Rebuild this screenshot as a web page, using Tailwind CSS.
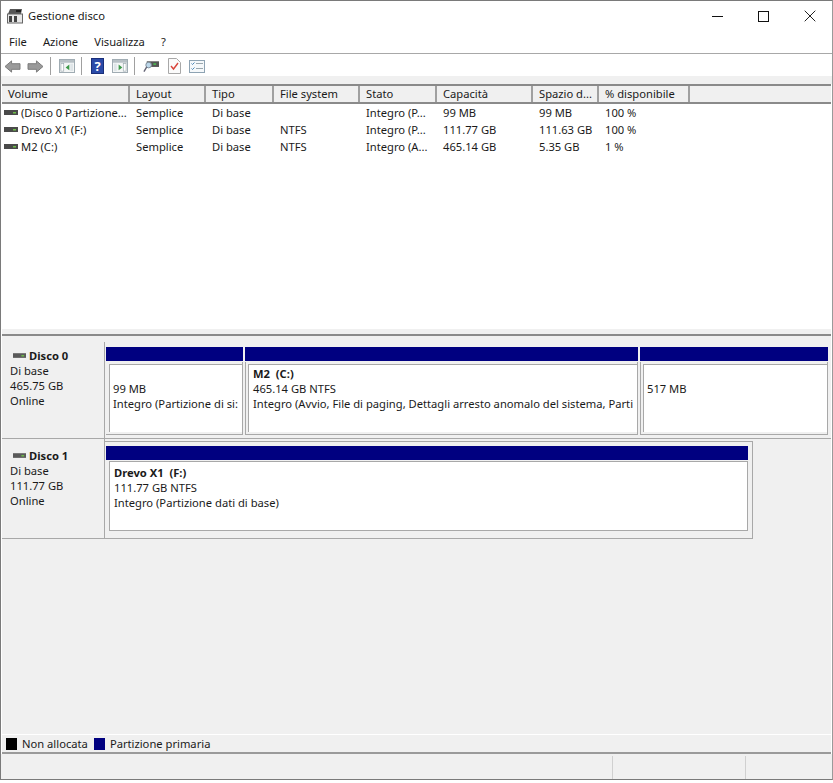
<!DOCTYPE html>
<html><head><meta charset="utf-8"><script src="https://cdn.jsdelivr.net/npm/@tailwindcss/browser@4"></script></head>
<body class="m-0 bg-white">
<div class="w-[833px] h-[783px] overflow-hidden flex flex-col bg-white font-['Noto_Sans',sans-serif] text-[11.2px] leading-[16px] text-[#1a1a1a]">
<div class="w-full h-[780px] flex flex-col border border-[#7a7a7a] border-r-[#9a9a9a]">
  <!-- title -->
  <div class="h-[30px] shrink-0 flex items-center bg-white relative">
    <svg class="ml-[6px] shrink-0" width="16" height="16" viewBox="0 0 16 16"><path d="M3 1h12l-1 5H1z" fill="#555"/><rect x="9" y="2" width="5" height="2" fill="#222"/><rect x="0.5" y="6" width="15" height="9" fill="#e8e8e8" stroke="#666"/><rect x="2" y="8" width="3" height="6" fill="#444"/><rect x="7" y="8" width="3" height="6" fill="#444"/></svg>
    <span class="ml-[5px]">Gestione disco</span>
    <div class="ml-auto flex items-center h-full">
      <svg class="mr-[35px]" width="11" height="11" viewBox="0 0 11 11"><path d="M0 5.5h11" stroke="#111"/></svg>
      <svg class="mr-[35px]" width="11" height="11" viewBox="0 0 11 11"><rect x=".5" y=".5" width="10" height="10" fill="none" stroke="#111"/></svg>
      <svg class="mr-[16px]" width="12" height="12" viewBox="0 0 12 12"><path d="M.7.7l10.6 10.6M11.3.7L.7 11.3" stroke="#222"/></svg>
    </div>
  </div>
  <!-- menu -->
  <div class="h-[23px] shrink-0 flex items-center bg-white border-b border-[#a8a8a8] pl-[8px] gap-[16px]">
    <span>File</span><span>Azione</span><span>Visualizza</span><span>?</span>
  </div>
  <!-- toolbar -->
  <div class="h-[22px] shrink-0 flex items-center bg-white pl-[3px] pt-[2px]">
    <svg class="shrink-0" width="17" height="15" viewBox="0 0 18 16"><path d="M1 8l7-6v3h9v6H8v3z" fill="#9a9a9a" stroke="#777"/></svg>
    <svg class="ml-[6px] shrink-0" width="17" height="15" viewBox="0 0 18 16"><path d="M17 8l-7-6v3H1v6h9v3z" fill="#9a9a9a" stroke="#777"/></svg>
    <div class="ml-[6px] w-px h-[18px] bg-[#a0a0a0]"></div>
    <svg class="ml-[8px] shrink-0" width="16" height="14" viewBox="0 0 17 15"><rect x=".5" y=".5" width="16" height="14" fill="#f4f6f6" stroke="#9aa7ae"/><rect x="1" y="1" width="15" height="3" fill="#b7c0c5"/><rect x="2" y="5" width="3" height="8" fill="#fff" stroke="#9aa7ae" stroke-width=".7"/><path d="M11 6v6l-4-3z" fill="#3e9a4a"/><rect x="12" y="5" width="3" height="8" fill="#dfe5e8"/></svg>
    <div class="ml-[6px] w-px h-[18px] bg-[#a0a0a0]"></div>
    <div class="ml-[9px] w-[13px] h-[16px] bg-[#2a4aa8] border border-[#1a2f7a] text-white font-bold text-[13px] leading-[14px] text-center">?</div>
    <svg class="ml-[8px] shrink-0" width="16" height="14" viewBox="0 0 17 15"><rect x=".5" y=".5" width="16" height="14" fill="#f4f6f6" stroke="#9aa7ae"/><rect x="1" y="1" width="15" height="3" fill="#b7c0c5"/><rect x="2" y="5" width="3" height="8" fill="#dfe5e8"/><path d="M7 6v6l4-3z" fill="#3e9a4a"/><rect x="12" y="5" width="3" height="8" fill="#fff" stroke="#9aa7ae" stroke-width=".7"/></svg>
    <div class="ml-[6px] w-px h-[18px] bg-[#a0a0a0]"></div>
    <svg class="ml-[8px] shrink-0" width="16" height="16" viewBox="0 0 17 16"><rect x="4" y="3" width="13" height="6" fill="#555"/><rect x="11" y="5" width="3" height="2" fill="#4caf50"/><circle cx="6" cy="7" r="3" fill="#bcd7ea" stroke="#7d8c99"/><path d="M4 9l-3 5" stroke="#667" stroke-width="1.5"/></svg>
    <svg class="ml-[9px] shrink-0" width="13" height="16" viewBox="0 0 13 16"><path d="M.5.5h8l4 4v11H.5z" fill="#fbfbfb" stroke="#a8a8a8"/><path d="M3 8l2.5 3L10 5" fill="none" stroke="#d9443a" stroke-width="1.4"/></svg>
    <svg class="ml-[8px] shrink-0" width="16" height="13" viewBox="0 0 16 13"><rect x=".5" y=".5" width="15" height="12" fill="#f5f8fa" stroke="#8ea3b3"/><path d="M2.5 3.5l1 1 2-2M2.5 8.5l1 1 2-2" fill="none" stroke="#4a86b8"/><path d="M7 3.5h7M7 8.5h7" stroke="#9aa7ae"/></svg>
  </div>
  <div class="h-[8px] shrink-0 bg-[#f0f0f0]"></div>
  <!-- list -->
  <div class="h-[245px] shrink-0 flex flex-col bg-white mr-[1px] ml-[1px]">
    <div class="h-[20px] shrink-0 flex bg-[#f0f0f0] border-t-2 border-b-2 border-[#8a8a8a] leading-[16px]">
      <div class="w-[128px] shrink-0 pl-[6px] border-r-2 border-[#a0a0a0]">Volume</div>
      <div class="w-[76px] shrink-0 pl-[6px] border-r-2 border-[#a0a0a0]">Layout</div>
      <div class="w-[68px] shrink-0 pl-[6px] border-r-2 border-[#a0a0a0]">Tipo</div>
      <div class="w-[86px] shrink-0 pl-[6px] border-r-2 border-[#a0a0a0]">File system</div>
      <div class="w-[77px] shrink-0 pl-[6px] border-r-2 border-[#a0a0a0]">Stato</div>
      <div class="w-[96px] shrink-0 pl-[6px] border-r-2 border-[#a0a0a0]">Capacità</div>
      <div class="w-[66px] shrink-0 pl-[6px] border-r-2 border-[#a0a0a0]">Spazio d...</div>
      <div class="w-[91px] shrink-0 pl-[6px] border-r-2 border-[#a0a0a0]">% disponibile</div>
    </div>
    <div>
      <div class="h-[17px] flex items-center">
        <div class="w-[128px] shrink-0 flex items-center pl-[2px]"><svg class="shrink-0" width="14" height="8" viewBox="0 0 14 8"><rect y="1" width="14" height="5" fill="#4a4a4a"/><rect x="9" y="3" width="3" height="1.5" fill="#6fbf4a"/></svg><span class="ml-[3px] whitespace-nowrap">(Disco 0 Partizione...</span></div>
        <div class="w-[76px] shrink-0 pl-[6px]">Semplice</div><div class="w-[68px] shrink-0 pl-[6px]">Di base</div><div class="w-[86px] shrink-0 pl-[6px]"></div><div class="w-[77px] shrink-0 pl-[6px]">Integro (P...</div><div class="w-[96px] shrink-0 pl-[6px]">99 MB</div><div class="w-[66px] shrink-0 pl-[6px]">99 MB</div><div class="w-[91px] shrink-0 pl-[6px]">100 %</div>
      </div>
      <div class="h-[17px] flex items-center">
        <div class="w-[128px] shrink-0 flex items-center pl-[2px]"><svg class="shrink-0" width="14" height="8" viewBox="0 0 14 8"><rect y="1" width="14" height="5" fill="#4a4a4a"/><rect x="9" y="3" width="3" height="1.5" fill="#6fbf4a"/></svg><span class="ml-[3px] whitespace-nowrap">Drevo X1 (F:)</span></div>
        <div class="w-[76px] shrink-0 pl-[6px]">Semplice</div><div class="w-[68px] shrink-0 pl-[6px]">Di base</div><div class="w-[86px] shrink-0 pl-[6px]">NTFS</div><div class="w-[77px] shrink-0 pl-[6px]">Integro (P...</div><div class="w-[96px] shrink-0 pl-[6px]">111.77 GB</div><div class="w-[66px] shrink-0 pl-[6px]">111.63 GB</div><div class="w-[91px] shrink-0 pl-[6px]">100 %</div>
      </div>
      <div class="h-[17px] flex items-center">
        <div class="w-[128px] shrink-0 flex items-center pl-[2px]"><svg class="shrink-0" width="14" height="8" viewBox="0 0 14 8"><rect y="1" width="14" height="5" fill="#4a4a4a"/><rect x="9" y="3" width="3" height="1.5" fill="#6fbf4a"/></svg><span class="ml-[3px] whitespace-nowrap">M2 (C:)</span></div>
        <div class="w-[76px] shrink-0 pl-[6px]">Semplice</div><div class="w-[68px] shrink-0 pl-[6px]">Di base</div><div class="w-[86px] shrink-0 pl-[6px]">NTFS</div><div class="w-[77px] shrink-0 pl-[6px]">Integro (A...</div><div class="w-[96px] shrink-0 pl-[6px]">465.14 GB</div><div class="w-[66px] shrink-0 pl-[6px]">5.35 GB</div><div class="w-[91px] shrink-0 pl-[6px]">1 %</div>
      </div>
    </div>
  </div>
  <div class="h-[7px] shrink-0 bg-[#f0f0f0] border-b-2 border-[#8a8a8a] ml-[1px] mr-[1px]"></div>
  <!-- graphics -->
  <div class="flex-1 flex flex-col bg-[#f0f0f0] ml-[1px] mr-[1px] min-h-0">
    <!-- disk 0 -->
    <div class="h-[103px] shrink-0 flex border-b border-[#a8a8a8]">
      <div class="w-[103px] shrink-0 border-r border-[#a8a8a8] pl-[8px] pt-[6px] mt-[6px] mb-[-2px]">
        <div class="flex items-center h-[15px]"><svg class="ml-[3px] shrink-0" width="13" height="8" viewBox="0 0 14 8"><rect y="1" width="14" height="5" fill="#5a5a5a"/><rect x="9" y="3" width="3" height="1.5" fill="#6fbf4a"/></svg><span class="font-bold ml-[3px]">Disco 0</span></div>
        <div class="leading-[15px]">Di base<br>465.75 GB<br>Online</div>
      </div>
      <div class="flex pt-[11px] pl-[1px] gap-[2px]">
        <div class="w-[137px] flex flex-col">
          <div class="h-[14px] bg-[#000080]"></div>
          <div class="mt-[1px] h-[73px] bg-[#f0f0f0] border-r border-b border-[#a8a8a8] pl-[3px] pt-[2px]">
            <div class="h-[68px] bg-white border-l border-t border-[#a8a8a8] pl-[3px] pt-[16px] leading-[15px] whitespace-nowrap">99 MB<br>Integro (Partizione di si:</div>
          </div>
        </div>
        <div class="w-[393px] flex flex-col">
          <div class="h-[14px] bg-[#000080]"></div>
          <div class="mt-[1px] h-[73px] bg-[#f0f0f0] border-r border-l border-b border-[#a8a8a8] pl-[2px] pt-[2px]">
            <div class="h-[68px] bg-white border-l border-t border-[#a8a8a8] pl-[4px] pt-[1px] leading-[15px] whitespace-nowrap"><b>M2&nbsp; (C:)</b><br>465.14 GB NTFS<br>Integro (Avvio, File di paging, Dettagli arresto anomalo del sistema, Parti</div>
          </div>
        </div>
        <div class="w-[188px] flex flex-col">
          <div class="h-[14px] bg-[#000080]"></div>
          <div class="mt-[1px] h-[73px] bg-[#f0f0f0] border-r border-l border-b border-[#a8a8a8] pl-[2px] pt-[2px]">
            <div class="h-[68px] bg-white border-l border-t border-[#a8a8a8] pl-[3px] pt-[16px] leading-[15px]">517 MB</div>
          </div>
        </div>
      </div>
    </div>
    <!-- disk 1 -->
    <div class="h-[100px] shrink-0 flex">
      <div class="w-[103px] shrink-0 border-r border-b border-[#a8a8a8] pl-[8px] pt-[8px] mt-[1px]">
        <div class="flex items-center h-[15px]"><svg class="ml-[3px] shrink-0" width="13" height="8" viewBox="0 0 14 8"><rect y="1" width="14" height="5" fill="#5a5a5a"/><rect x="9" y="3" width="3" height="1.5" fill="#6fbf4a"/></svg><span class="font-bold ml-[3px]">Disco 1</span></div>
        <div class="leading-[15px]">Di base<br>111.77 GB<br>Online</div>
      </div>
      <div class="w-[648px] h-[98px] mt-[2px] pl-[1px] pt-[4px] border-r border-b border-t border-[#a8a8a8]">
        <div class="h-[14px] w-[642px] bg-[#000080]"></div>
        <div class="w-[642px] mt-[1px] pl-[3px]">
          <div class="h-[70px] bg-white border border-[#a8a8a8] pl-[4px] pt-[3px] leading-[15px] whitespace-nowrap"><b>Drevo X1&nbsp; (F:)</b><br>111.77 GB NTFS<br>Integro (Partizione dati di base)</div>
        </div>
      </div>
    </div>
    <div class="flex-1"></div>
    <!-- legend -->
    <div class="h-[20px] shrink-0 flex items-center border-t border-white border-b-2 border-b-[#9a9a9a] pl-[4px]">
      <div class="w-[11px] h-[12px] bg-black"></div><span class="ml-[5px]">Non allocata</span>
      <div class="ml-[6px] w-[11px] h-[12px] bg-[#000080]"></div><span class="ml-[5px]">Partizione primaria</span>
    </div>
  </div>
  <!-- status -->
  <div class="h-[25px] shrink-0 flex justify-end bg-[#f0f0f0] pt-[2px]">
    <div class="w-[133px] border-l border-[#d0d0d0]"></div>
    <div class="w-[87px] border-l border-[#d0d0d0]"></div>
  </div>
</div>
</div>
</body></html>
